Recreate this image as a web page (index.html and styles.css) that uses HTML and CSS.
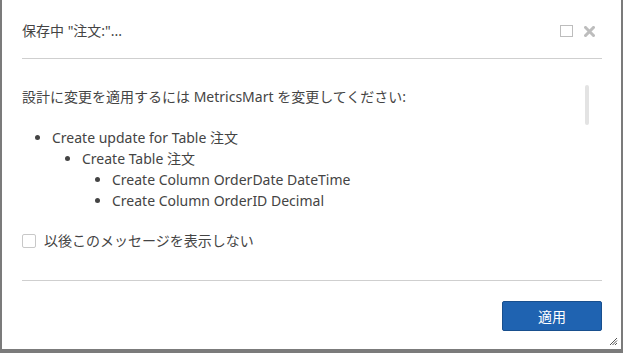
FILE: index.html
```html
<!DOCTYPE html>
<html lang="ja">
<head>
<meta charset="utf-8">
<link rel="stylesheet" href="styles.css">
</head>
<body>
<div class="dialog">
  <div class="header">
    <div class="title">保存中 "注文:"...</div>
    <div class="tools">
      <span class="max"></span>
      <svg class="close" width="11" height="11" viewBox="0 0 11 11"><path d="M1.5 1.5 L9.5 9.5 M9.5 1.5 L1.5 9.5" stroke="#bdbdbd" stroke-width="3" stroke-linecap="square"/></svg>
    </div>
  </div>
  <div class="body">
    <p class="msg">設計に変更を適用するには MetricsMart を変更してください:</p>
    <ul class="lvl">
      <li>Create update for Table 注文
        <ul class="lvl">
          <li>Create Table 注文
            <ul class="lvl">
              <li>Create Column OrderDate DateTime</li>
              <li>Create Column OrderID Decimal</li>
            </ul>
          </li>
        </ul>
      </li>
    </ul>
    <label class="check"><span class="box"></span>以後このメッセージを表示しない</label>
    <div class="scrollbar"></div>
  </div>
  <div class="footer">
    <button class="apply">適用</button>
  </div>
  <svg class="grip" width="9" height="9" viewBox="0 0 9 9"><path d="M8 1 L1 8 M8 3.5 L3.5 8 M8 6 L6 8" stroke="#555" stroke-width="1"/></svg>
</div>
</body>
</html>
```
FILE: styles.css
```css
html, body {
  margin: 0;
  padding: 0;
}
body {
  background: #7b7b7b;
  width: 623px;
  height: 353px;
  overflow: hidden;
  font-family: "Noto Sans", "Noto Sans CJK JP", sans-serif;
  color: #444;
}
.dialog {
  position: relative;
  margin-left: 2px;
  width: 619px;
  height: 349px;
  background: #fff;
  box-sizing: border-box;
  padding: 0 19px 0 20px;
  display: flex;
  flex-direction: column;
}
.header {
  display: flex;
  align-items: center;
  justify-content: space-between;
  padding: 22px 0 18px;
  border-bottom: 1px solid #cfcfcf;
  height: 18px;
}
.title {
  font-size: 14px;
  line-height: 18px;
  color: #444;
}
.tools {
  display: flex;
  align-items: center;
  gap: 11px;
  margin-right: 7px;
}
.max {
  display: block;
  width: 11px;
  height: 10px;
  border: 1px solid #bdbdbd;
}
.close {
  display: block;
}
.body {
  position: relative;
  padding-top: 28px;
  height: 193px;
  border-bottom: 1px solid #cfcfcf;
  font-size: 14px;
}
.msg {
  margin: 0 0 20px;
  line-height: 20px;
}
.lvl {
  margin: 0;
  padding-left: 30px;
  list-style: disc;
  line-height: 21px;
}
.check {
  display: flex;
  align-items: center;
  margin-top: 19px;
  line-height: 21px;
}
.box {
  width: 12px;
  height: 12px;
  border: 1px solid #c8c8c8;
  border-radius: 2px;
  margin-right: 8px;
}
.scrollbar {
  position: absolute;
  right: 13px;
  top: 26px;
  width: 4px;
  height: 40px;
  border-radius: 2px;
  background: #e3e3e3;
}
.footer {
  display: flex;
  justify-content: flex-end;
  padding-top: 20px;
}
.apply {
  width: 100px;
  height: 30px;
  background: #1f63b1;
  border: 1px solid #184f8e;
  border-radius: 2px;
  color: #fff;
  font-family: "Noto Sans CJK JP", sans-serif;
  font-size: 14px;
  padding: 0;
}
.grip {
  position: absolute;
  right: 3px;
  bottom: 3px;
}
```
